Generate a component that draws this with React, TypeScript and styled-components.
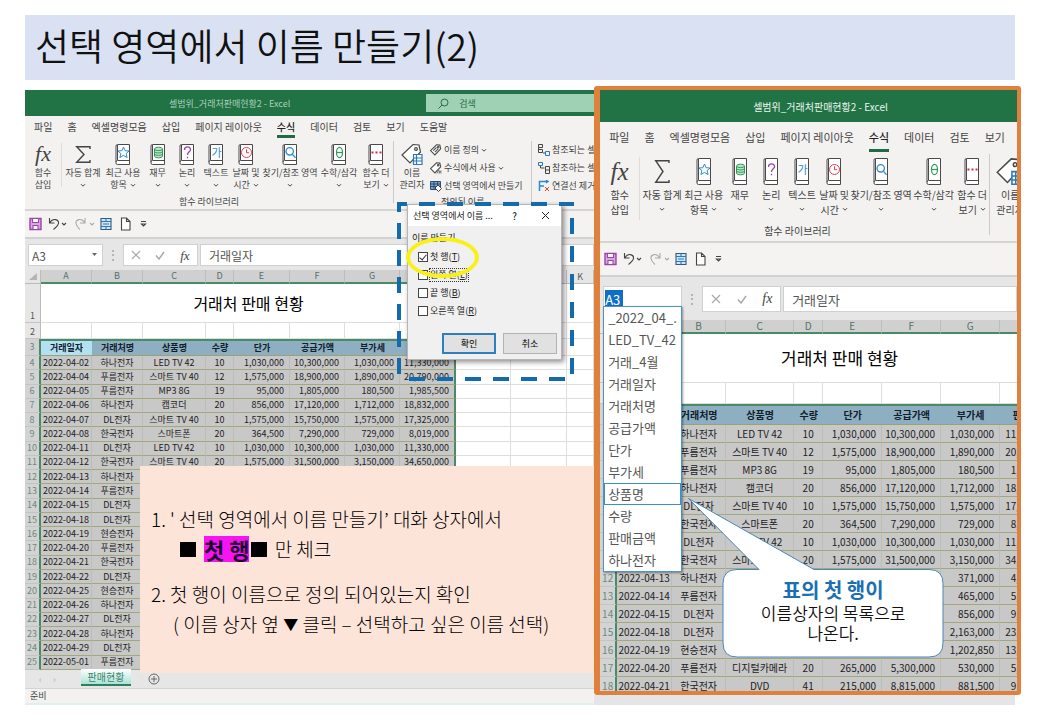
import React from 'react';
import styled, { createGlobalStyle, css, ThemeProvider } from 'styled-components';

type Size = {
  title: number; titleFont: number; tabs: number; tabFont: number; ribbon: number; ribbonTop: number;
  toolFont: number; toolLine: number; icon: number; fx: number; tools: number[]; captionLeft: number;
  quick: number; formula: number; formulaTop: number; box: number; nameBox: number; formulaFont: number;
  cellFont: number; numFont: number; heading: number;
};

const small: Size = {
  title: 26, titleFont: 9, tabs: 23, tabFont: 10, ribbon: 72, ribbonTop: 4,
  toolFont: 9, toolLine: 12, icon: 22, fx: 22, tools: [37, 42, 38, 31, 28, 30, 30, 58, 40, 34], captionLeft: 154,
  quick: 26, formula: 33, formulaTop: 5, box: 22, nameBox: 75, formulaFont: 12,
  cellFont: 9, numFont: 9, heading: 16,
};

const large: Size = {
  title: 32, titleFont: 10, tabs: 30, tabFont: 11, ribbon: 91, ribbonTop: 5,
  toolFont: 10, toolLine: 15, icon: 28, fx: 25, tools: [40, 44, 39, 33, 30, 32, 32, 62, 43, 34], captionLeft: 164,
  quick: 32, formula: 45, formulaTop: 9, box: 26, nameBox: 79, formulaFont: 13,
  cellFont: 10, numFont: 10, heading: 17,
};

declare module 'styled-components' {
  export interface DefaultTheme extends Size {}
}

const Global = createGlobalStyle`
  * { box-sizing: border-box; }
  body { margin: 0; background: #fff; color: #111; font-family: "Noto Sans CJK KR", "Noto Sans", sans-serif; }
  button, input { font-family: inherit; }
`;

const Page = styled.div`
  padding: 15px 25px;
`;
const SlideTitle = styled.h1`
  margin: 0 0 6px;
  height: 65px;
  padding: 0 10px;
  background: #dae1f2;
  font-size: 37px;
  font-weight: 350;
  line-height: 60px;
  white-space: nowrap;
  overflow: hidden;
`;
const Panels = styled.main`
  display: grid;
  grid-template-columns: minmax(0, 4fr) minmax(0, 3fr);
  margin-right: -6px;
`;
const LeftWindow = styled.section`
  position: relative;
  margin-top: 4px;
  min-width: 0;
  overflow: hidden;
  background: #e6e6e6;
`;
const RightColumn = styled.div`
  display: flex;
  flex-direction: column;
`;
const Frame = styled.section`
  position: relative;
  flex: 1;
  min-height: 0;
  display: flex;
  flex-direction: column;
  overflow: hidden;
  border: solid #df803c;
  border-width: 4px 4px 4px 6px;
  border-radius: 3px;
  background: #e6e6e6;
`;
const FrameFoot = styled.div`
  height: 10px;
  margin-right: 6px;
  background: #e5e5e7;
`;

const TitleBar = styled.header`
  display: flex;
  align-items: center;
  flex: none;
  height: ${p => p.theme.title}px;
  background: #217346;
  color: #e3f1e8;
  font-size: ${p => p.theme.titleFont}px;
  white-space: nowrap;
`;
const FileName = styled.span<{ $left: number; $dim?: boolean }>`
  margin-left: ${p => p.$left}px;
  color: ${p => (p.$dim ? '#a9cdb8' : '#e9f5ee')};
`;
const Search = styled.label`
  display: flex;
  align-items: center;
  gap: 10px;
  margin-left: auto;
  width: 168px;
  height: 18px;
  padding-left: 12px;
  background: #9fd1b5;
`;
const SearchInput = styled.input`
  width: 100px;
  border: 0;
  padding: 0;
  background: none;
  font-size: 9px;
  &::placeholder { color: #2b6c48; opacity: 1; }
`;
const Tabs = styled.nav`
  display: flex;
  flex: none;
  gap: 15px;
  height: ${p => p.theme.tabs}px;
  padding: ${p => p.theme.ribbonTop - 1}px 9px 0;
  background: #f3f2f1;
  font-size: ${p => p.theme.tabFont}px;
  line-height: ${p => p.theme.tabs - 7}px;
  white-space: nowrap;
  overflow: hidden;
`;
const Tab = styled.a<{ $active?: boolean }>`
  color: ${p => (p.$active ? '#222' : '#444')};
  font-weight: ${p => (p.$active ? 500 : 400)};
  height: ${p => p.theme.tabs - 4}px;
  text-decoration: none;
  border-bottom: ${p => (p.$active ? '3px solid #1e6b45' : '0')};
`;
const Ribbon = styled.div`
  display: flex;
  flex: none;
  height: ${p => p.theme.ribbon}px;
  background: #f3f2f1;
  border-bottom: 2px solid #d6d5d4;
  overflow: hidden;
`;
const Group = styled.div<{ $pad?: number }>`
  flex: none;
  display: flex;
  flex-direction: column;
  padding-left: ${p => p.$pad || 0}px;
`;
const GroupRow = styled.div`
  display: flex;
  flex: 1;
  padding-top: ${p => p.theme.ribbonTop}px;
`;
const Caption = styled.div<{ $left: number }>`
  padding-left: ${p => p.$left}px;
  height: ${p => p.theme.toolLine + 1}px;
  line-height: 12px;
  font-size: ${p => p.theme.toolFont}px;
  color: #444;
`;
const Divider = styled.i<{ $tall?: boolean }>`
  flex: none;
  width: 1px;
  height: ${p => (p.$tall ? p.theme.ribbon - 10 : p.theme.ribbon - 28)}px;
  margin-top: ${p => (p.$tall ? 2 : 0)}px;
  background: ${p => (p.$tall ? '#cbcac9' : '#dddcdb')};
`;
const Tool = styled.button<{ $w: number }>`
  flex: none;
  display: flex;
  flex-direction: column;
  align-items: center;
  width: ${p => p.$w}px;
  padding: 0;
  border: 0;
  background: none;
  color: #444;
  font-size: ${p => p.theme.toolFont}px;
  line-height: ${p => p.theme.toolLine}px;
  white-space: nowrap;
`;
const IconSlot = styled.span`
  display: flex;
  align-items: center;
  justify-content: center;
  height: ${p => p.theme.icon}px;
  margin-bottom: 2px;
`;
const ToolLine = styled.span`
  display: flex;
  align-items: center;
  justify-content: center;
  gap: 3px;
  height: ${p => p.theme.toolLine}px;
`;
const SmallTools = styled.div<{ $w: number }>`
  display: flex;
  flex-direction: column;
  width: ${p => p.$w}px;
  margin-top: -2px;
`;
const SmallTool = styled.button`
  display: flex;
  align-items: center;
  gap: 2px;
  height: 18px;
  padding: 0;
  border: 0;
  background: none;
  color: #444;
  font-size: 9px;
  line-height: 12px;
  white-space: nowrap;
`;
const QuickBar = styled.div`
  display: flex;
  align-items: center;
  flex: none;
  height: ${p => p.theme.quick}px;
  padding-left: 4px;
  background: #f4f3f2;
`;
const FormulaRow = styled.div`
  position: relative;
  display: flex;
  flex: none;
  height: ${p => p.theme.formula}px;
  padding: ${p => p.theme.formulaTop}px 0 0 3px;
  border-top: 2px solid #d2d2d2;
  background: #e6e6e6;
`;
const Box = styled.div<{ $w?: number }>`
  display: flex;
  align-items: center;
  flex: ${p => (p.$w ? 'none' : '1')};
  width: ${p => (p.$w ? p.$w + 'px' : 'auto')};
  height: ${p => p.theme.box}px;
  min-width: 0;
  margin-left: ${p => (p.$w ? 0 : 2)}px;
  border: 1px solid #d0d0d0;
  background: #fff;
`;
const NameInput = styled.input<{ $selected?: boolean }>`
  border: 0;
  padding: 0;
  margin-left: ${p => (p.$selected ? 1 : 3)}px;
  width: ${p => (p.$selected ? 18 : 60)}px;
  height: 19px;
  font-size: ${p => p.theme.formulaFont}px;
  background: ${p => (p.$selected ? '#0f6fc6' : 'transparent')};
  color: ${p => (p.$selected ? '#fff' : '#555')};
`;
const FormulaInput = styled.input`
  width: 100%;
  border: 0;
  padding: 0 8px;
  height: 20px;
  background: none;
  color: #555;
  font-size: ${p => p.theme.formulaFont}px;
`;
const Dots = styled.span`
  flex: none;
  width: 20px;
  color: #999;
  font-size: 12px;
  line-height: ${p => p.theme.box - 2}px;
  text-align: center;
`;
const IconButton = styled.button`
  display: flex;
  align-items: center;
  justify-content: center;
  flex: 1;
  padding: 0;
  border: 0;
  background: none;
`;
const Fx = styled.span<{ $size: number }>`
  font: italic ${p => p.$size}px/1 "Liberation Serif", serif;
  color: #444;
`;

const SheetView = styled.div<{ $fill?: boolean }>`
  overflow: hidden;
  ${p => p.$fill && css`flex: 1 1 0; min-height: 0; height: 0;`}
`;
const Sheet = styled.table<{ $h?: number }>`
  width: 100%;
  height: ${p => (p.$h ? p.$h + 'px' : 'auto')};
  table-layout: fixed;
  border-collapse: separate;
  border-spacing: 0;
  background: #fff;
  font-size: ${p => p.theme.cellFont}px;
  line-height: 12px;
`;
const Row = styled.tr<{ $h?: number }>`
  ${p => p.$h && css`height: ${p.$h}px;`}
`;
const ColHead = styled.th<{ $on?: boolean }>`
  padding: 0;
  overflow: hidden;
  font-weight: 400;
  color: ${p => (p.$on ? '#54716a' : '#555')};
  background: ${p => (p.$on ? '#d0d0d0' : '#e6e6e6')};
  border-right: 1px solid #bdbdbd;
  border-bottom: ${p => (p.$on ? '2px solid #4b8a66' : '1px solid #bbb')};
`;
const RowHead = styled.th<{ $on?: boolean }>`
  padding: 0;
  font-weight: 400;
  text-align: center;
  vertical-align: ${p => (p.$on ? 'middle' : 'bottom')};
  color: ${p => (p.$on ? '#6c8a80' : '#555')};
  background: ${p => (p.$on ? '#d3d3d3' : '#e6e6e6')};
  border-bottom: 1px solid #c4c4c4;
  border-right: ${p => (p.$on ? '2px solid #4b8a66' : '1px solid #bbb')};
`;
const Merged = styled.td`
  padding: 0;
  text-align: center;
  font-size: ${p => p.theme.heading}px;
  line-height: 24px;
  color: #000;
  border-bottom: 1px solid #dcdcdc;
`;
const Blank = styled.td`
  padding: 0;
  border-right: 1px solid #dedede;
  border-bottom: 1px solid #dedede;
`;
const Field = styled.th<{ $first?: boolean }>`
  padding: 0;
  overflow: hidden;
  white-space: nowrap;
  font-weight: 700;
  color: #10202c;
  background: ${p => (p.$first ? '#b4e0f3' : '#8eafc1')};
  border-top: 2px solid #4b8a66;
  border-bottom: 1px solid #9aa275;
`;
const Cell = styled.td<{ $num?: boolean; $last?: boolean }>`
  padding: 0 ${p => (p.$num ? 5 : 0)}px 0 0;
  overflow: ${p => (p.$num ? 'visible' : 'hidden')};
  white-space: nowrap;
  text-align: ${p => (p.$num ? 'right' : 'center')};
  font-size: ${p => (p.$num ? p.theme.numFont : p.theme.cellFont)}px;
  color: #222;
  background: #c8c8c8;
  border-right: ${p => (p.$last ? '2px solid #4b8a66' : '1px solid #bdbdb8')};
  border-bottom: 1px solid #a2a77c;
`;

const SheetTabs = styled.div`
  display: flex;
  align-items: center;
  height: 18px;
  padding-left: 14px;
  color: #aaa;
  font-size: 9px;
`;
const SheetTab = styled.button`
  width: 50px;
  height: 17px;
  margin: 0 17px 3px 14px;
  padding: 0;
  border: 0;
  border-bottom: 2px solid #2f7f5c;
  background: linear-gradient(#fff, #a9e2d8);
  color: #3c8469;
  font-size: 10px;
  line-height: 13px;
`;
const Arrow = styled.span`
  width: 14px;
  text-align: left;
`;
const Status = styled.footer`
  height: 17px;
  padding-left: 5px;
  border-top: 1px solid #d4d4d4;
  border-bottom: 2px solid #e0f0f0;
  background: #f3f2f1;
  color: #444;
  font-size: 9px;
  line-height: 14px;
`;

const Note = styled.article`
  position: absolute;
  left: 115px;
  right: 0;
  bottom: 32px;
  height: 207px;
  padding: 38px 0 0 11px;
  background: #fde4d9;
  color: #000;
  font-size: 19px;
  font-weight: 300;
  line-height: 30px;
  white-space: nowrap;
  overflow: hidden;
`;
const NoteLine = styled.p<{ $indent?: number; $gap?: number }>`
  display: flex;
  align-items: center;
  margin: 0 0 ${p => p.$gap || 0}px ${p => p.$indent || 0}px;
  height: 30px;
  white-space: pre;
`;
const Square = styled.i`
  width: 16px;
  height: 15px;
  margin-right: 3px;
  background: #000;
`;
const Mark = styled.mark`
  margin: 0 2px 0 5px;
  background: #f614f0;
  color: #1c0030;
  font-size: 22px;
  font-weight: 700;
  line-height: 26px;
`;
const Triangle = styled.span`
  font-size: 15px;
`;
const Dashes = styled.svg`
  position: absolute;
  left: 372px;
  top: 112px;
`;
const Dialog = styled.form`
  position: absolute;
  left: 382px;
  top: 114px;
  width: 155px;
  height: 156px;
  border: 1px solid #b5b5b5;
  background: #f0f0f0;
  box-shadow: 2px 2px 5px rgba(0, 0, 0, 0.45);
  color: #222;
  font-size: 9px;
  line-height: 12px;
`;
const DialogTitle = styled.div`
  display: flex;
  align-items: center;
  height: 21px;
  padding-left: 5px;
  background: #fff;
  white-space: nowrap;
`;
const DialogName = styled.span`
  flex: 1;
`;
const DialogButton = styled.button`
  width: 31px;
  padding: 0;
  border: 0;
  background: none;
  font-size: 10px;
`;
const Options = styled.fieldset`
  margin: 6px 4px 0;
  padding: 4px 0 0 6px;
  border: 0;
`;
const Legend = styled.legend`
  padding: 0;
  margin-left: -6px;
`;
const Option = styled.label`
  display: flex;
  align-items: center;
  gap: 2px;
  height: 18px;
`;
const Check = styled.input`
  appearance: none;
  display: flex;
  justify-content: center;
  width: 10px;
  height: 10px;
  margin: 0;
  border: 1px solid #444;
  background: #fff;
  &:checked::after {
    content: "";
    width: 3px;
    height: 6px;
    border: solid #333;
    border-width: 0 1px 1px 0;
    transform: rotate(40deg);
  }
`;
const OptionText = styled.span<{ $focus?: boolean }>`
  outline: ${p => (p.$focus ? '1px dotted #333' : 'none')};
`;
const Actions = styled.div`
  display: flex;
  justify-content: flex-end;
  gap: 7px;
  padding: 13px 4px 0 0;
`;
const Action = styled.button<{ $main?: boolean }>`
  width: 54px;
  height: 21px;
  padding: 0;
  border: ${p => (p.$main ? '2px solid #2f7fc0' : '1px solid #b3b3b3')};
  background: #e1e1e1;
  font-size: 9px;
`;
const Ring = styled.i`
  position: absolute;
  left: 381px;
  top: 147px;
  width: 73px;
  height: 41px;
  border: 4px solid #f8f016;
  border-radius: 50%;
`;
const NameList = styled.ul`
  position: absolute;
  z-index: 2;
  left: 3px;
  top: 29px;
  width: 79px;
  margin: 0;
  padding: 0;
  list-style: none;
  border: 1px solid #4b94c9;
  background: #fff;
  box-shadow: 1px 1px 2px rgba(0, 0, 0, 0.4);
  color: #555;
  font-size: 13px;
  line-height: 20px;
`;
const NameItem = styled.li<{ $on?: boolean }>`
  height: 22px;
  padding-left: 3px;
  white-space: nowrap;
  overflow: hidden;
  border: 1px solid ${p => (p.$on ? '#3a8ec9' : 'transparent')};
`;
const Callout = styled.aside`
  position: absolute;
  left: 88px;
  top: 408px;
  width: 256px;
  height: 160px;
`;
const CalloutShape = styled.svg`
  position: absolute;
  inset: 0;
`;
const CalloutText = styled.p`
  position: relative;
  margin: 0;
  padding: 82px 0 0 34px;
  text-align: center;
  color: #111;
  font-size: 17px;
  font-weight: 350;
  line-height: 20px;
`;
const Strong = styled.strong`
  display: block;
  margin-bottom: 3px;
  color: #1a70b3;
  font-size: 20px;
  font-weight: 700;
`;

const Chevron = () => (
  <svg width="6" height="5" viewBox="0 0 6 5" fill="none" stroke="#444"><path d="M1 1.2l2 2 2-2" /></svg>
);

const symbols: Record<string, React.ReactNode> = {
  star: <path d="M0-5.5l1.6 3.7 4 .3-3 2.6 1 3.900L0 2.900-3.600 5l1-3.900-3-2.600 4-.3z" stroke="#2c8bd0" />,
  coins: (
    <g stroke="#2f9a55" fill="#bfe5c9">
      <path d="M-4-3.500v7c0 2.400 8 2.400 8 0v-7" />
      <ellipse cx="0" cy="-3.600" rx="4" ry="1.700" />
      <path d="M-4-1.200c0 2.200 8 2.200 8 0M-4 1.200c0 2.200 8 2.200 8 0" fill="none" />
    </g>
  ),
  clock: <g stroke="#dc4455"><circle r="5" /><path d="M0-3.200V.2h2.600" /></g>,
  find: <g stroke="#2c8bd0" strokeWidth="1.3"><circle cx="-.8" cy="-1.200" r="3.700" /><path d="M1.800 1.600L5 5.200" /></g>,
  dots: <g fill="#d02f3f" stroke="none"><rect x="-5" y="-1" width="2" height="2" /><rect x="-1" y="-1" width="2" height="2" /><rect x="3" y="-1" width="2" height="2" /></g>,
  theta: <g stroke="#2f9a55" strokeWidth="1.2"><ellipse rx="3" ry="5.200" /><path d="M-3 0h6" /></g>,
  ask: <path d="M-3-2.600c0-4 6-4 6-.2C3-.6 0-.6 0 2.400M0 4.200v1.600" stroke="#9a3fb0" strokeWidth="1.3" />,
};

const Book = ({ kind, h }: { kind: string; h: number }) => (
  <svg width="16" height={h} viewBox={`0 0 16 ${h}`} fill="none" stroke="#4a4a4a">
    <path d={`M14.5 .5H2.5q-1.5 0-1.5 1.5V${h - 2}q0 1.5 1.5 1.5h12z`} fill="#fff" />
    <path d={`M14.5 ${h - 4.5}H2.5q-1.5 0-1.5 1.5M2.5 1v${h - 6}`} />
    <g transform={`translate(8.5 ${(h - 4) / 2})`}>
      {kind === 'ga'
        ? <text x="0" y="4" textAnchor="middle" fontSize="11" fill="#2c8bd0" stroke="none">가</text>
        : symbols[kind]}
    </g>
  </svg>
);

const Sigma = ({ h }: { h: number }) => (
  <svg width="16" height={h} viewBox={`0 0 16 ${h}`} fill="none" stroke="#444" strokeWidth="1.4">
    <path d={`M15 4V1.7H1.7L9 ${h / 2} 1.7 ${h - 1.7}H15V${h - 4}`} />
  </svg>
);

const TagIcon = ({ s, mark }: { s: number; mark: 'big' | 'pen' | 'fx' }) => (
  <svg width={s} height={s} viewBox="0 0 22 22" fill="none" stroke="#4a4a4a" strokeWidth={mark === 'big' ? 1.2 : 2}>
    <path d="M1 12L12 1.5l6 .5 1.5 7L9 20z" fill="#fff" />
    <circle cx="15" cy="6" r="1.4" />
    {mark === 'big' && <g stroke="#2c78b8"><path d="M12.5 11.5h8.500v10h-8.500z" fill="#fff" /><path d="M12.500 15h8.500M12.500 18h8.500M15.500 11.500v10" /></g>}
    {mark === 'pen' && <path d="M6 12l6-6M9 15l6-6" />}
    {mark === 'fx' && <path d="M17 12c-3 0-2 9-5 9M12 15h5M16 16l5 5M21 16l-5 5" stroke="#777" />}
  </svg>
);

const GridPick = () => (
  <svg width="12" height="12" viewBox="0 0 12 12" fill="none" stroke="#2d4d73">
    <path d="M.5 1.500h10v8H.5z" fill="#6fa9dc" /><path d="M.5 4h10M.5 6.500h10M4 1.500v8M7.500 1.500v8" /><path d="M5 8l3-3 3.500 3.500-3 3z" fill="#fff" stroke="#444" />
  </svg>
);

const Trace = ({ kind }: { kind: number }) => (
  <svg width="12" height="12" viewBox="0 0 12 12" fill="none" stroke="#444">
    {kind === 0 && <><path d="M.5.5h4v3h-4zM.5 3.500v5h4v-3h-4" /><path d="M7.500 7.500h4v4h-4z" stroke="#2c78b8" /><path d="M5 9h2" /></>}
    {kind === 1 && <><path d="M.5.5h4v3h-4z" stroke="#2c78b8" /><path d="M7.500 4.500h4v7h-4zM7.500 8h4M2.500 4v2h4" /></>}
    {kind === 2 && <><path d="M1.500 11V1.500H10M1.500 6H6M8 0l2 1.500L8 3" stroke="#2c8bd0" strokeWidth="1.500" /><path d="M7 7l4 4M11 7l-4 4" stroke="#e0413a" /></>}
  </svg>
);

const tools = [
  { icon: 'fx', a: '함수', b: '삽입', drop: false },
  { icon: 'sum', a: '자동 합계', b: '', drop: true },
  { icon: 'star', a: '최근 사용', b: '항목', drop: true },
  { icon: 'coins', a: '재무', b: '', drop: true },
  { icon: 'ask', a: '논리', b: '', drop: true },
  { icon: 'ga', a: '텍스트', b: '', drop: true },
  { icon: 'clock', a: '날짜 및', b: '시간', drop: true },
  { icon: 'find', a: '찾기/참조 영역', b: '', drop: true },
  { icon: 'theta', a: '수학/삼각', b: '', drop: true },
  { icon: 'dots', a: '함수 더', b: '보기', drop: true },
];

const RibbonBar = ({ size, full }: { size: Size; full?: boolean }) => (
  <Ribbon>
    <Group>
      <GroupRow>
        {tools.map((t, i) => (
          <React.Fragment key={t.a}>
            <Tool type="button" $w={size.tools[i] - (i === 0 ? 1 : 0)}>
              <IconSlot>
                {t.icon === 'fx' ? <Fx $size={size.fx}>fx</Fx>
                  : t.icon === 'sum' ? <Sigma h={size.icon - 3} />
                    : <Book kind={t.icon} h={size.icon - 1} />}
              </IconSlot>
              <ToolLine>{t.a}</ToolLine>
              <ToolLine>{t.b}{t.drop && <Chevron />}</ToolLine>
            </Tool>
            {i === 0 && <Divider />}
          </React.Fragment>
        ))}
      </GroupRow>
      <Caption $left={size.captionLeft}>함수 라이브러리</Caption>
    </Group>
    <Divider $tall />
    <Group>
      <GroupRow>
        <Tool type="button" $w={full ? 36 : 40}>
          <IconSlot><TagIcon s={size.icon} mark="big" /></IconSlot>
          <ToolLine>이름</ToolLine>
          <ToolLine>관리자</ToolLine>
        </Tool>
        {full && (
          <SmallTools $w={101}>
            <SmallTool type="button"><TagIcon s={12} mark="pen" />이름 정의 <Chevron /></SmallTool>
            <SmallTool type="button"><TagIcon s={12} mark="fx" />수식에서 사용 <Chevron /></SmallTool>
            <SmallTool type="button"><GridPick />선택 영역에서 만들기</SmallTool>
          </SmallTools>
        )}
      </GroupRow>
      {full && <Caption $left={47}>정의된 이름</Caption>}
    </Group>
    {full && (
      <>
        <Divider $tall />
        <Group $pad={6}>
          <GroupRow>
            <SmallTools $w={90}>
              <SmallTool type="button"><Trace kind={0} />참조되는 셀</SmallTool>
              <SmallTool type="button"><Trace kind={1} />참조하는 셀</SmallTool>
              <SmallTool type="button"><Trace kind={2} />연결선 제거</SmallTool>
            </SmallTools>
          </GroupRow>
        </Group>
      </>
    )}
  </Ribbon>
);

const QuickAccess = () => (
  <QuickBar>
    <svg width="124" height="16" viewBox="0 0 124 16" fill="none" stroke="#444" strokeWidth="1.1">
      <path d="M1 2.500h11v11H1z" fill="#d9a6e0" stroke="#9a45a8" strokeWidth="1.400" />
      <path d="M3.500 2.500h6v4h-6zM4 9.500h5v4H4z" fill="#fff" stroke="#9a45a8" />
      <path d="M20.500 2v5h5M21 6.500c3-5 9-3 8.500 1-.3 2.500-3 4-5 6" />
      <path d="M33 7l2 2 2-2" />
      <g stroke="#aaa"><path d="M56 2v5h-5M55.500 6.500c-3-5-9-3-8.500 1 .3 2.500 2 4 4 6" /><path d="M61 7l2 2 2-2" /></g>
      <path d="M72 2.500h10v11H72z" fill="#cfe6f7" stroke="#31587d" />
      <path d="M72 5.500h10M72 10.500h10M77 2.500v3M77 10.500v3M74 8h6" stroke="#2c78b8" />
      <path d="M92.500 2h5l3.500 3.500V14h-8.500zM97.500 2v3.500h3.500" fill="#fff" />
      <path d="M112 5.500h5M112.500 8l2 2 2-2z" />
    </svg>
  </QuickBar>
);

const tabNames = ['파일', '홈', '엑셀명령모음', '삽입', '페이지 레이아웃', '수식', '데이터', '검토', '보기'];

const TabRow = ({ help }: { help?: boolean }) => (
  <Tabs>
    {[...tabNames, ...(help ? ['도움말'] : [])].map(t => <Tab key={t} href="#" $active={t === '수식'}>{t}</Tab>)}
  </Tabs>
);

const FormulaBar = ({ size, picking, children }: { size: Size; picking?: boolean; children?: React.ReactNode }) => (
  <FormulaRow>
    <Box $w={size.nameBox}>
      <NameInput aria-label="이름 상자" defaultValue="A3" $selected={picking} />
      {!picking && <svg width="5" height="4" viewBox="0 0 5 4"><path d="M0 0h5L2.500 3z" fill="#666" /></svg>}
    </Box>
    <Dots>⋮</Dots>
    <Box $w={size.nameBox}>
      <IconButton type="button" aria-label="취소"><svg width="10" height="10" viewBox="0 0 10 10" stroke="#aaa" strokeWidth="1.200"><path d="M1 1l8 8M9 1L1 9" /></svg></IconButton>
      <IconButton type="button" aria-label="입력"><svg width="10" height="10" viewBox="0 0 10 10" fill="none" stroke="#aaa" strokeWidth="1.500"><path d="M1 5.500L4 9l5-7" /></svg></IconButton>
      <IconButton type="button" aria-label="함수 삽입"><Fx $size={size.formulaFont + 1}>fx</Fx></IconButton>
    </Box>
    <Box><FormulaInput aria-label="수식 입력줄" defaultValue="거래일자" /></Box>
    {children}
  </FormulaRow>
);

const fields = ['거래일자', '거래처명', '상품명', '수량', '단가', '공급가액', '부가세', '판매금액'];
const records: string[][] = [
  ['2022-04-02', '하나전자', 'LED TV 42', '10', '1,030,000', '10,300,000', '1,030,000', '11,330,000'],
  ['2022-04-04', '푸름전자', '스마트 TV 40', '12', '1,575,000', '18,900,000', '1,890,000', '20,790,000'],
  ['2022-04-05', '푸름전자', 'MP3 8G', '19', '95,000', '1,805,000', '180,500', '1,985,500'],
  ['2022-04-06', '하나전자', '캠코더', '20', '856,000', '17,120,000', '1,712,000', '18,832,000'],
  ['2022-04-07', 'DL전자', '스마트 TV 40', '10', '1,575,000', '15,750,000', '1,575,000', '17,325,000'],
  ['2022-04-08', '한국전자', '스마트폰', '20', '364,500', '7,290,000', '729,000', '8,019,000'],
  ['2022-04-11', 'DL전자', 'LED TV 42', '10', '1,030,000', '10,300,000', '1,030,000', '11,330,000'],
  ['2022-04-12', '한국전자', '스마트 TV 40', '20', '1,575,000', '31,500,000', '3,150,000', '34,650,000'],
  ['2022-04-13', '하나전자', '', '', '', '', '371,000', '4,081,000'],
  ['2022-04-14', '푸름전자', '', '', '', '', '465,000', '5,115,000'],
  ['2022-04-15', 'DL전자', '', '', '', '', '856,000', '9,416,000'],
  ['2022-04-18', 'DL전자', '', '', '', '', '2,163,000', '23,793,000'],
  ['2022-04-19', '현승전자', '', '', '', '', '1,202,850', '13,231,350'],
  ['2022-04-20', '푸름전자', '디지털카메라', '20', '265,000', '5,300,000', '530,000', '5,830,000'],
  ['2022-04-21', '한국전자', 'DVD', '41', '215,000', '8,815,000', '881,500', '9,696,500'],
  ['2022-04-22', 'DL전자'], ['2022-04-25', '현승전자'], ['2022-04-26', '하나전자'], ['2022-04-27', 'DL전자'],
  ['2022-04-28', '하나전자'], ['2022-04-29', 'DL전자'], ['2022-05-01', '푸름전자'],
];

type SheetProps = {
  cols: number[]; extra: string[]; rows: number; heights: number[]; total?: number; rowH?: number;
  /** records from this index on show only the date and the customer */
  shortFrom?: number;
  /** records before this index leave the first column and the row number empty */
  listOver?: number;
};

const SheetTable = ({ cols, extra, rows, shortFrom = 99, listOver = 0, heights, total, rowH }: SheetProps) => (
  <Sheet $h={total}>
    <colgroup>
      {cols.map((w, i) => <col key={i} width={w} />)}
      {extra.length > 0 && <col />}
    </colgroup>
    <thead>
      <Row $h={heights[0]}>
        <ColHead><svg width="8" height="7" viewBox="0 0 8 7"><path d="M8 0v7H0z" fill="#b5b5b5" /></svg></ColHead>
        {'ABCDEFGH'.split('').map(c => <ColHead key={c} $on>{listOver && (c === 'A' || c === 'H') ? '' : c}</ColHead>)}
        {extra.map(c => <ColHead key={c}>{c}</ColHead>)}
      </Row>
    </thead>
    <tbody>
      <Row $h={heights[1]}>
        <RowHead>{listOver ? '' : 1}</RowHead>
        <Merged colSpan={8}>거래처 판매 현황</Merged>
        {extra.map(c => <Blank key={c} />)}
      </Row>
      <Row $h={heights[2]}>
        <RowHead>{listOver ? '' : 2}</RowHead>
        {fields.map(c => <Blank key={c} />)}
        {extra.map(c => <Blank key={c} />)}
      </Row>
      <Row $h={heights[3]}>
        <RowHead $on>{listOver ? '' : 3}</RowHead>
        {fields.map((f, i) => <Field key={f} $first={i === 0}>{listOver && i === 0 ? '' : f}</Field>)}
        {extra.map(c => <Blank key={c} />)}
      </Row>
      {records.slice(0, rows).map((r, n) => (
        <Row key={r[0]} $h={rowH}>
          <RowHead $on>{n < listOver ? '' : n + 4}</RowHead>
          {fields.map((f, i) => (
            <Cell key={f} $num={i > 3} $last={i === 7}>
              {(n >= shortFrom && i > 1) || (n < listOver && i === 0) ? '' : r[i]}
            </Cell>
          ))}
          {extra.map(c => <Blank key={c} />)}
        </Row>
      ))}
    </tbody>
  </Sheet>
);

const names = ['_2022_04_.', 'LED_TV_42', '거래_4월', '거래일자', '거래처명', '공급가액', '단가', '부가세', '상품명', '수량', '판매금액', '하나전자'];
const options = [['첫 행', 'T'], ['왼쪽 열', 'L'], ['끝 행', 'B'], ['오른쪽 열', 'R']];

const NamesDialog = () => (
  <Dialog>
    <DialogTitle>
      <DialogName>선택 영역에서 이름 ...</DialogName>
      <DialogButton type="button">?</DialogButton>
      <DialogButton type="button" aria-label="닫기">
        <svg width="9" height="9" viewBox="0 0 9 9" stroke="#222"><path d="M1 1l7 7M8 1L1 8" /></svg>
      </DialogButton>
    </DialogTitle>
    <Options>
      <Legend>이름 만들기</Legend>
      {options.map(([t, k], i) => (
        <Option key={k}>
          <Check type="checkbox" defaultChecked={i === 0} />
          <OptionText $focus={i === 1}>{t}(<u>{k}</u>)</OptionText>
        </Option>
      ))}
    </Options>
    <Actions>
      <Action type="button" $main>확인</Action>
      <Action type="button">취소</Action>
    </Actions>
  </Dialog>
);

export default function App() {
  return (
    <Page>
      <Global />
      <SlideTitle>선택 영역에서 이름 만들기(2)</SlideTitle>
      <Panels>
        <ThemeProvider theme={small}>
          <LeftWindow>
            <TitleBar>
              <FileName $left={144} $dim>셀범위_거래처판매현황2 - Excel</FileName>
              <Search>
                <svg width="11" height="11" viewBox="0 0 11 11" fill="none" stroke="#2b6c48"><circle cx="6.500" cy="4.500" r="3.500" /><path d="M4 7l-3.500 3.500" /></svg>
                <SearchInput placeholder="검색" aria-label="검색" />
              </Search>
            </TitleBar>
            <TabRow help />
            <RibbonBar size={small} full />
            <QuickAccess />
            <FormulaBar size={small} />
            <SheetView>
              <SheetTable
                cols={[16, 51, 51, 63, 28, 56, 55, 55, 56, 55, 56]}
                extra={['I', 'J', 'K']}
                rows={22}
                shortFrom={8}
                heights={[13, 39, 16, 17]}
                total={400}
              />
            </SheetView>
            <SheetTabs>
              <Arrow>‹</Arrow><Arrow>›</Arrow>
              <SheetTab type="button">판매현황</SheetTab>
              <svg width="12" height="12" viewBox="0 0 12 12" fill="none" stroke="#666"><circle cx="6" cy="6" r="5" /><path d="M6 3v6M3 6h6" /></svg>
            </SheetTabs>
            <Status>준비</Status>
            <Note>
              <NoteLine>1. ' 선택 영역에서 이름 만들기’ 대화 상자에서</NoteLine>
              <NoteLine $indent={29} $gap={15}><Square /><Mark>첫 행</Mark><Square /> 만 체크</NoteLine>
              <NoteLine>2. 첫 행이 이름으로 정의 되어있는지 확인</NoteLine>
              <NoteLine $indent={22}>( 이름 상자 옆 <Triangle>▼</Triangle> 클릭 – 선택하고 싶은 이름 선택)</NoteLine>
            </Note>
            <NamesDialog />
            <Dashes width="178" height="180" viewBox="0 0 178 180" fill="none" stroke="#146bab" strokeWidth="4">
              <path d="M0 2H177" strokeDasharray="16 12" strokeDashoffset="6" />
              <path d="M2 0V178" strokeDasharray="16 11" strokeDashoffset="6" />
              <path d="M175 0V178" strokeDasharray="16 12" strokeDashoffset="12" />
              <path d="M0 177H177" strokeDasharray="16 12" strokeDashoffset="16" />
            </Dashes>
            <Ring />
          </LeftWindow>
        </ThemeProvider>
        <ThemeProvider theme={large}>
          <RightColumn>
            <Frame>
              <TitleBar><FileName $left={153}>셀범위_거래처판매현황2 - Excel</FileName></TitleBar>
              <TabRow />
              <RibbonBar size={large} />
              <QuickAccess />
              <FormulaBar size={large} picking>
                <NameList role="listbox" aria-label="이름 목록">
                  {names.map(n => <NameItem key={n} role="option" aria-selected={n === '상품명'} $on={n === '상품명'}>{n}</NameItem>)}
                </NameList>
              </FormulaBar>
              <SheetView $fill>
                <SheetTable
                  cols={[17, 55, 54, 68, 29, 59, 59, 59, 62]}
                  extra={[]}
                  rows={15}
                  listOver={8}
                  heights={[13, 49, 21, 21]}
                  rowH={18}
                />
              </SheetView>
              <Callout>
                <CalloutShape width="256" height="160" viewBox="0 0 256 160" fill="#fff" stroke="#4a86b8">
                  <path d="M.5 .5L126 71.500H241q14 0 14 14V145q0 14-14 14H49q-14 0-14-14V85.500q0-14 14-14H71z" />
                </CalloutShape>
                <CalloutText><Strong>표의 첫 행이</Strong>이름상자의 목록으로<br />나온다.</CalloutText>
              </Callout>
            </Frame>
            <FrameFoot />
          </RightColumn>
        </ThemeProvider>
      </Panels>
    </Page>
  );
}
